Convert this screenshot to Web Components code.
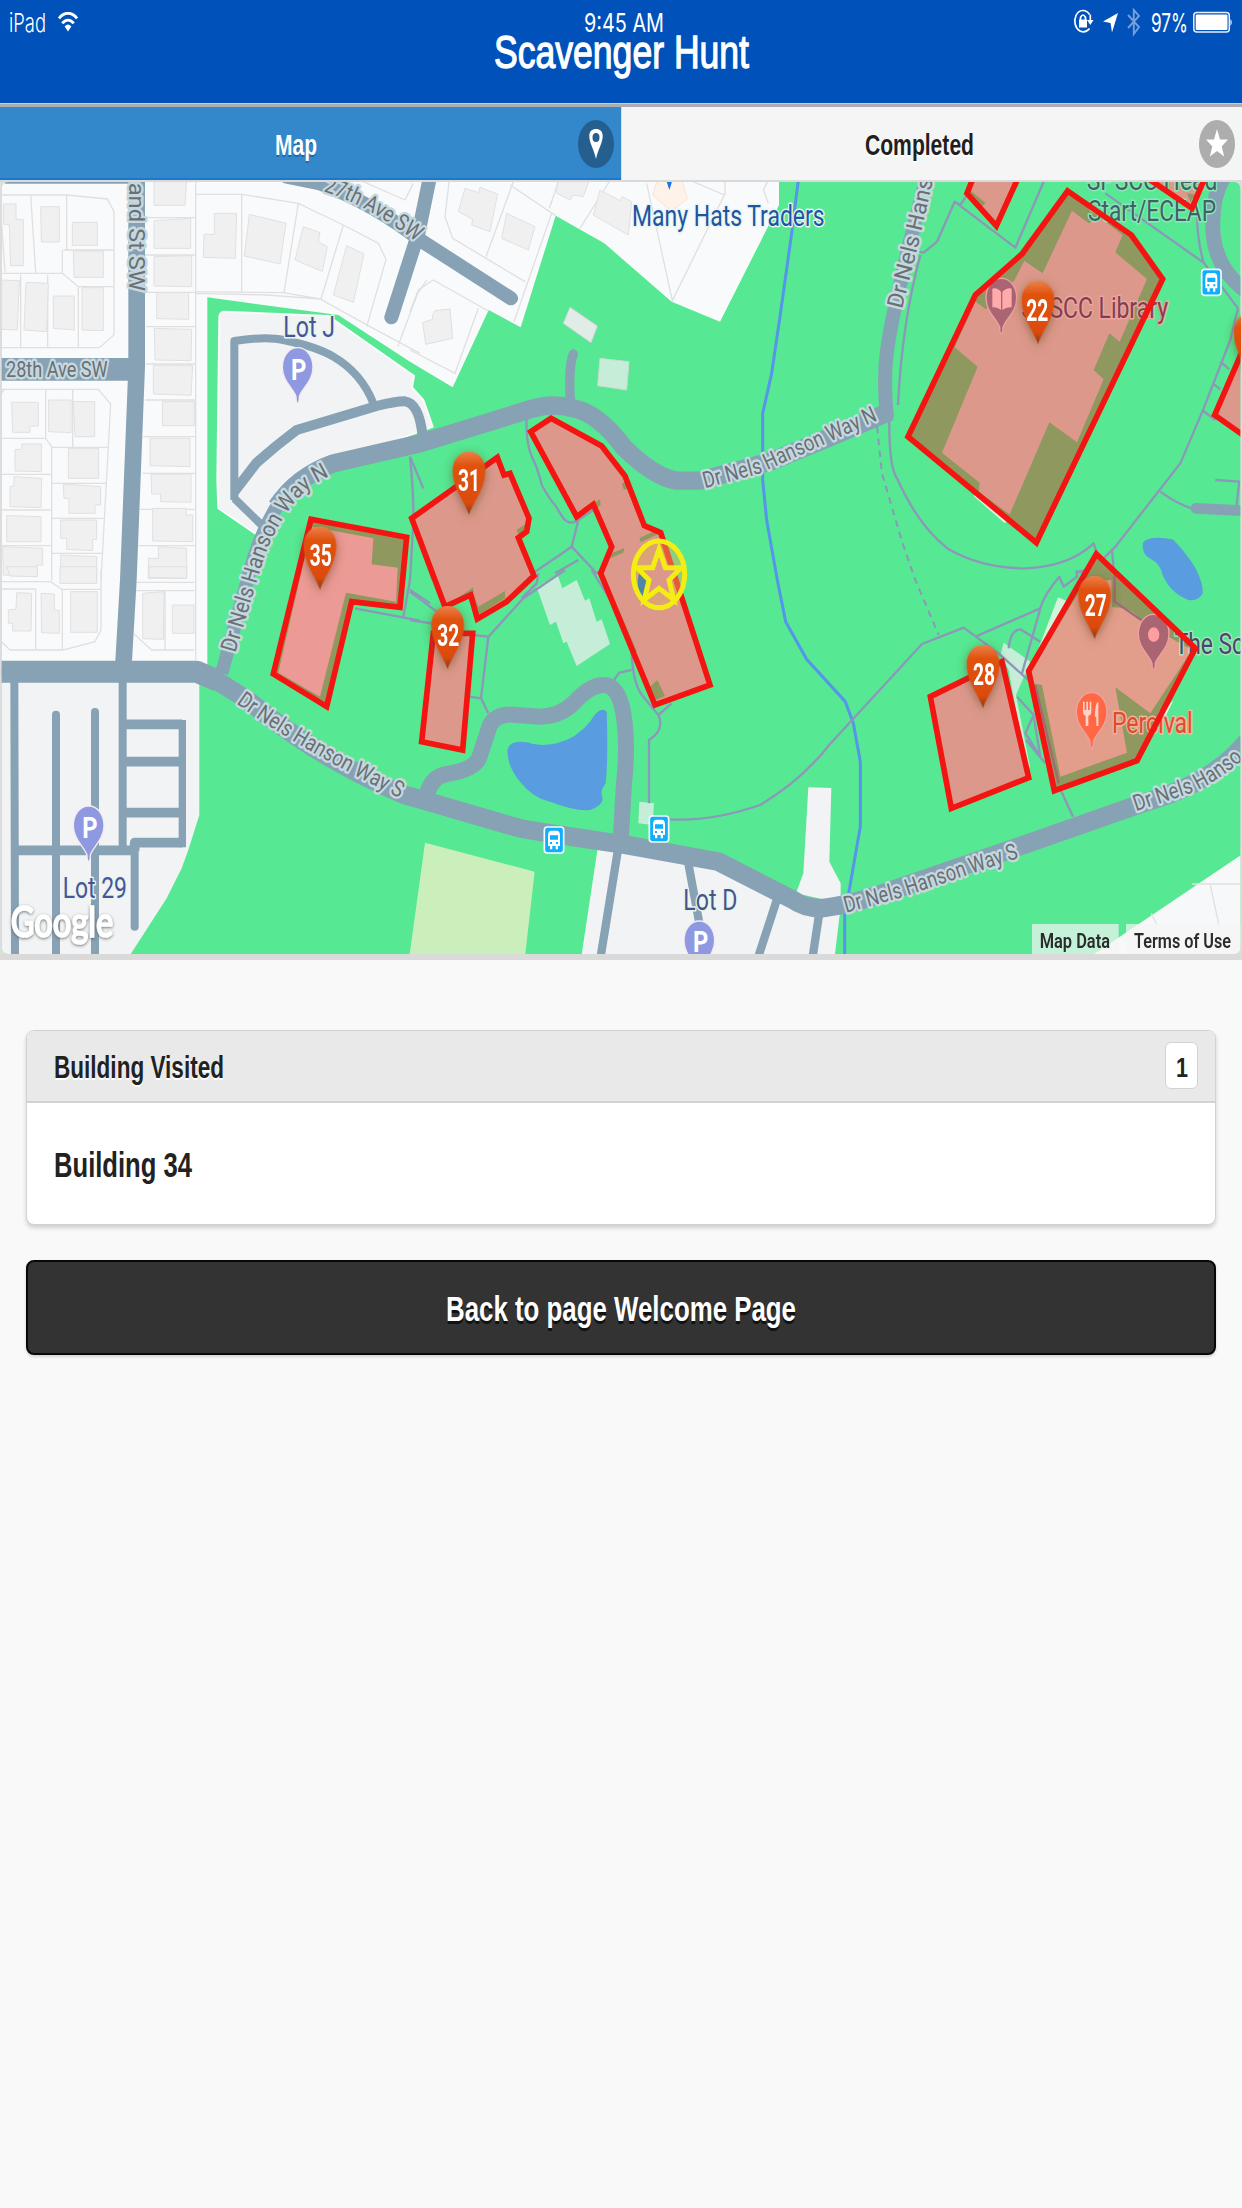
<!DOCTYPE html>
<html lang="en">
<head>
<meta charset="utf-8">
<title>Scavenger Hunt</title>
<style>
html,body{margin:0;padding:0;background:#f9f9f9}
body{font-family:"Liberation Sans",Arial,sans-serif;width:1242px;min-height:2208px}
</style>
</head>
<body>
<hunt-app></hunt-app>

<template id="t-app">
<style>
:host{display:flex;flex-direction:column;min-height:2208px;background:#f9f9f9}
nav{display:flex;height:73px;border-bottom:2px solid #d9d9d9;background:#ddd}
main{display:flex;flex-direction:column;padding:70px 26px 0;gap:36px}
</style>
<app-header>Scavenger Hunt</app-header>
<nav>
<nav-tab active label="Map" w="42"><svg slot="icon" width="36" height="48" viewBox="-18 -24 36 48"><ellipse rx="18" ry="24" fill="#245f8f"/><path fill-rule="evenodd" fill="#fff" d="M0 15C-2 5-6.700 -1-6.700-8C-6.700-12.500-4-15 0-15S6.700-12.500 6.700-8C6.700-1 2 5 0 15ZM0-11A3.500 4.500 0 1 0 0-2A3.500 4.500 0 1 0 0-11Z"/></svg></nav-tab>
<nav-tab label="Completed" w="109"><svg slot="icon" width="36" height="48" viewBox="-18 -24 36 48"><ellipse rx="18" ry="24" fill="#adadad"/><path fill="#fff" d="M0-15L3-4.500H11L4.700 2.500L7.200 12.500L0 7L-7.200 12.500L-4.700 2.500L-11-4.500H-3Z"/></svg></nav-tab>
</nav>
<campus-map></campus-map>
<main>
<visit-list label="Building Visited" count="1"><fit-text w="138" size="34.500" weight="bold">Building 34</fit-text></visit-list>
<dark-button><fit-text w="350" size="35" weight="bold" shadow="0 2.500px 0 #111">Back to page Welcome Page</fit-text></dark-button>
</main>
</template>

<template id="t-header">
<style>
:host{display:block;height:103px;background:#0051ba;color:#fff;border-bottom:1px solid #e0c8bb;box-shadow:0 3px 0 #aeaeb0;margin-bottom:3px}
.bar{display:grid;grid-template-columns:1fr 80px 1fr;padding:6px 9px 0 15px;height:30px;align-items:start}
.left{display:flex;gap:12px;margin-left:-6px}
.right{display:flex;justify-content:flex-end;align-items:flex-start}
.left svg{margin-top:6px}
h1{margin:-15px 0 0;display:flex;justify-content:center;font-weight:400}
</style>
<div class="bar">
<div class="left"><fit-text w="37" size="26" family="Inter" weight="300">iPad</fit-text>
<svg width="20" height="21" viewBox="0 0 20 21" fill="none" stroke="#fff" stroke-width="2.900"><path d="M1 6.500C6-.5 14-.5 19 6.500M4.300 11.300C7.500 7 12.500 7 15.700 11.300"/><path d="M6.600 14.500Q10 10.700 13.400 14.500L10 19.500Z" fill="#fff" stroke="none"/></svg></div>
<fit-text w="80" size="26" family="Inter" weight="400">9:45 AM</fit-text>
<div class="right">
<svg width="80" height="32" viewBox="1071 6 80 32"><g fill="none" stroke="#fff" stroke-width="1.700"><path d="M1089.500 14.500C1086 9 1079 9 1076 15.500C1073.500 21 1075 28 1080 31C1084 33 1087.500 31 1089.500 28.500"/><path d="M1090.300 14.500V20"/><path d="M1080.500 20.500V17.500Q1083 12.500 1085.500 17.500V20.500"/></g><path fill="#fff" d="M1079 19.500h8v8h-8zM1087 20H1093.500L1090.300 25ZM1103 21.500L1118 13L1112 32.500L1110.500 23Z"/><path d="M1128 15L1139 27L1133.800 34V10L1139 16L1128 28" fill="none" stroke="#769fdc" stroke-width="1.900"/></svg>
<fit-text w="37" size="26" family="Inter" weight="400">97%</fit-text>
<svg style="margin-left:5px" width="40" height="28" viewBox="0 0 40 28"><rect x=".8" y="6.500" width="35.500" height="19.500" rx="3" fill="none" stroke="#e6effa" stroke-width="1.500"/><rect x="2.700" y="8.500" width="31.800" height="15.500" rx="1" fill="#fff"/><path d="M37.500 13Q40 16 37.500 20Z" fill="#fff"/></svg>
</div></div>
<h1></h1>
</template>

<template id="t-tab">
<style>
:host{display:flex;flex:1;align-items:center;background:#f5f5f5;color:#1f1f1f;padding:0 7px 0 0;border-left:1px solid #ddd;box-sizing:border-box}
:host([active]){background:#3388cc;color:#fff;border-left:0;border-bottom:2px solid #1c78c8;padding-top:2px}
.l{flex:1;display:flex;justify-content:center;padding:0 0 6px 19px}
:host([active]) .l{padding-left:14px}
::slotted(svg){display:block}
</style>
<div class="l"></div><slot name="icon"></slot>
</template>

<template id="t-list">
<style>
:host{display:block;border:1.500px solid #d2d2d2;border-radius:8px;background:#fff;box-shadow:0 3px 4px rgba(0,0,0,.17);overflow:hidden;height:195px;margin-bottom:-1px;box-sizing:border-box;color:#222}
header{height:71.500px;border-bottom:2px solid #d2d2d2;background:#e9e9e9;display:flex;justify-content:space-between;align-items:center;padding:0 17px 0 26.500px;box-sizing:border-box}
.n{width:33px;height:47px;border:1.500px solid #d2d2d2;border-radius:6px;background:#fff;box-sizing:border-box;display:flex;align-items:center;justify-content:center;padding-bottom:6px}
.t{padding-bottom:6px}
.row{height:121px;display:flex;align-items:center;padding:0 26.500px 8px;box-sizing:border-box}
</style>
<header><div class="t"></div><div class="n"></div></header>
<div class="row"><slot></slot></div>
</template>

<template id="t-button">
<style>
:host{display:flex;height:95px;box-sizing:border-box;border:2px solid #080808;border-radius:8px;background:#333;color:#fff;justify-content:center;align-items:center;padding-bottom:9px;box-shadow:0 2px 3px rgba(0,0,0,.15)}
</style><slot></slot>
</template>

<template id="t-map">
<style>
:host{display:block;height:772px;background:#ddd;border-bottom:6px solid #dadada}
svg{display:block}
.road{fill:none;stroke:#87a2b4;stroke-linejoin:round}
.parcel{fill:none;stroke:#e0e0e0;stroke-width:4}
.house{fill:#f0f0f0;stroke:#e0e0e0;stroke-width:3}
.path{fill:none;stroke:#8c98b9;stroke-width:7;stroke-linejoin:round}
.lot{fill:#f1f3f4}.pale{fill:#c6edd8}.water{fill:#599ce0}
.out{fill:none;stroke:#f41512;stroke-width:17}
.pink{fill:#dc998b}.olive{fill:#8f985f}
text{font-family:Roboto,sans-serif}
.rl{font-size:68px;font-weight:400;fill:#6a6f74;stroke:#c5d8df;stroke-width:15;paint-order:stroke;stroke-linejoin:round}
.poi{font-size:86px;stroke:#e8f6ef;stroke-width:9;paint-order:stroke;stroke-linejoin:round}
.num{font-size:94px;font-weight:700;fill:#fff}
</style>
<svg width="1242" height="772" viewBox="0 546 3726 2316">
<defs>
<clipPath id="frame"><rect x="5" y="546" width="3716" height="2316" rx="18"/></clipPath>
<linearGradient id="og" x2="0" y2="1"><stop offset="0" stop-color="#ec8049"/><stop offset=".22" stop-color="#e0520f"/><stop offset=".8" stop-color="#dc4c0c"/><stop offset="1" stop-color="#8c3510"/></linearGradient>
<filter id="sh" x="-60%" y="-40%" width="220%" height="180%"><feDropShadow dx="0" dy="8" stdDeviation="14" flood-color="#542" flood-opacity=".55"/></filter>
<filter id="gs" x="-20%" y="-40%" width="140%" height="180%"><feDropShadow dx="0" dy="3" stdDeviation="5" flood-color="#555" flood-opacity=".8"/></filter>
<path id="op" d="M0 0C-10-34-49-78-49-132C-49-168-28-190 0-190S49-168 49-132C49-78 10-34 0 0Z"/>
<path id="pp" d="M0 0Q-5-2-5-20C-12-44-46-66-46-108C-46-142-26-167 0-167S46-142 46-108C46-66 12-44 5-20Q5-2 0 0Z"/>
<g id="bus"><rect x="-29" y="-39" width="58" height="78" rx="9" fill="#10aefc" stroke="#f2fbff" stroke-width="5"/><path fill="#fff" fill-rule="evenodd" d="M-18-13Q-18-28-8-28H8Q18-28 18-13V18H12V28H5V18H-5V28H-12V18H-18ZM-12-14V-1H12V-14ZM-12 6v6h6v-6zM6 6v6h6v-6z"/></g>
<path id="r27" d="M970 34Q1105 75 1262 196"/>
<path id="rst" d="M386 8V350"/>
<path id="rn1" d="M706 1420L775 1190Q810 1060 880 972Q930 910 1010 880"/>
<path id="rn2" d="M885 925L1050 880L1410 718"/>
<path id="rn3" d="M240 388L290 190L340-30"/>
<path id="rs1" d="M708 400Q900 540 1215 692"/>
<path id="rs2" d="M72 1028L240 982L600 860"/>
<path id="rs3" d="M942 724L1110 668Q1200 630 1300 535"/>
</defs>
<g clip-path="url(#frame)">
<rect y="540" width="3726" height="2330" fill="#56e893"/>
<path fill="#f9fafc" d="M0 540H2337V615L2160 965L2015 905L1813 730L1667 647L1562 982L1466 930L1358 1162L1230 1085L1015 945L622 892V2000H0Z"/>
<path class="lot" d="M0 2030H598V2445L565 2550L545 2605L500 2695L387 2870H0Z"/>
<g transform="translate(0 540)">
<path class="lot" stroke="#fafbfc" stroke-width="6" d="M672 395L985 408L1242 588L1236 622L1270 660L1298 740L1000 850L880 890L768 1062L655 985L652 900L658 410Q660 396 672 395Z"/>
<path class="parcel" d="M5 45H200L322 57L342 95V465L298 503H5M92 45L107 278M200 45V207M190 210H342M5 280H187L235 320H342M187 280V210M62 285V503M143 285V503M235 320V503M5 135L15 275M435 113H585M435 225H585M435 337H585M438 440H585M438 552H585M435 660H585M430 770H585M428 880H585M420 988H585M415 1097H585M587 0V1440M587 43H725L895 70L1030 135L1135 190L1158 238L1100 440M725 43V335M895 70L852 338M1030 135L963 357M587 335L850 338L960 357L1110 440L1260 520M587 340L800 345L960 357M1090 5L1215 60L1240 10M1280 300L1253 340L1193 500M5 628H295L332 672L303 1200M5 640L12 628M137 628V775L155 800V1200M218 628V800M5 775H137M155 802H325M5 883H152M155 910H318M5 990H152M155 1015H310M5 1097H152M155 1120H305"/>
<path class="house" d="M10 72H48V118H70V257H32L28 133H10ZM122 80H178V186H124ZM217 127H292V196H217ZM220 213H310V292H222ZM5 300L58 302L52 450L5 448ZM78 307L145 310L140 455L72 450ZM160 348H223V450L160 445ZM246 323H310V452L246 450ZM462-5H560L555 76H462ZM462 122L572 115V205H462ZM462 230L575 227V320L462 318ZM470 338H566V418L470 416ZM463 445L575 448L573 542L465 540ZM460 556H578L573 646L460 642ZM487 665H583V737H487ZM450 775H570V860L450 857ZM453 882H573V967L482 965V942H455ZM458 985H558V1005H578V1085L458 1083ZM475 1100L560 1105V1195H445V1135H475ZM35 667H115V738H90V757H38ZM146 660H213V758L146 755ZM220 665H284V770H225ZM45 808H65V792H124V875L45 873ZM205 805H296V895H205ZM42 890L125 895L123 983L30 980V920L42 917ZM190 912L302 920V975H285V1000H207V955H192ZM20 1007L123 1010V1085H20ZM182 1020H290V1078H278V1112L200 1108V1075H182ZM8 1100L128 1105V1155H112V1190L10 1185ZM182 1125L290 1130V1210H182ZM643 100H710L706 235L610 232L612 163H643ZM748 103L858 130L840 252L733 228ZM910 140L960 158L955 185L982 200L967 274L885 240ZM1040 197L1092 222L1060 367L1000 345Z"/>
</g>
<g transform="translate(1230 540)">
<path class="parcel" d="M118 0L105 110L128 175L345 305M312 0L228 230M300 15L437 107M425 100L312 425M445 5L418 85M510 145L598 5M710 10L787 362L943 45L850 5M945 0V45M0 395L25 330L70 300L235 393M205 385L135 580L0 510M1075 0L1060 30L1075 70"/>
<path class="house" d="M165 25L205 38L210 22L263 42L240 155L185 135L188 118L145 95ZM290 100L375 140L355 210L275 175ZM445-5H540L520 50L490 45L480 60L438 38ZM570 30L630 62L637 50L665 65L655 165L550 105ZM68 405L75 392L120 387L128 475L47 493L38 428L68 418Z"/>
<path fill="#fff2e8" stroke="#f8e2d2" stroke-width="3" d="M742 0H815L832 55L785 95L728 45Z"/>
<path fill="#e0ece6" stroke="#d6d0dc" stroke-width="3" d="M480 382L562 438L543 488L460 430Z"/><path class="pale" stroke="#c9dccf" stroke-width="3" d="M570 535L657 545L650 630L563 617Z"/>
</g>
<g transform="translate(0 1710)">
<path class="parcel" d="M5 35H152L185 58H303M303 0V180L285 215L190 240H30L5 215M107 58V238M187 58V238M5 57H107M410 37H583M407 62H583M495 62V238M402 192L455 240H583"/>
<path class="house" d="M447-10H560V25L447 22ZM20-10H112V20L30 18ZM180-10H290V40H180ZM50 68L95 70L93 183H38V160H25V120L48 118ZM123 70L163 72V120L178 122V190L125 188ZM212 65H292V187H212ZM428 70L492 65L490 208L428 206ZM517 105H582V190H517Z"/>
</g>
<g transform="translate(1230 1710)">
<path fill="#caefbb" d="M45 818L374 905L345 1160H-2Z"/>
<path class="lot" d="M563 835L820 870L930 890L1150 990L1292 1010L1274 1160H514ZM1195 652L1264 654L1258 875L1292 940V1000L1158 970L1180 910Z"/>
<path class="water" d="M590 425Q570 405 540 455Q500 505 440 520Q390 532 350 517Q300 508 292 540Q292 590 330 635Q370 685 420 695Q500 725 540 720Q580 705 578 685Q568 665 587 640Q595 560 590 425Z"/>
<path class="pale" d="M380 52L442 13L457 55L500 30L525 92L538 85L560 155L575 148L600 222L500 288L470 215L460 220L438 155L420 165ZM688 695L732 700L728 765L685 760Z"/>
</g>
<g transform="translate(2466 1710)">
<path fill="#f7f8fa" d="M1262 852L805 1160H1262Z"/><path class="parcel" d="M1110 942H1260M1165 945L1190 1062M988 1030L1003 1062"/>
<path fill="#d3f3da" d="M708 82L740 95L640 260Z"/><path fill="#e3f3e4" d="M1055 390L1020 460L1000 450Z"/><path class="pale" d="M545 218L625 275L582 375L624 590L615 600L560 300L535 255Z"/>
</g>
<path class="water" transform="translate(2466 540)" d="M965 1085Q985 1066 1052 1078Q1085 1110 1118 1160Q1145 1210 1142 1240Q1130 1265 1100 1260Q1045 1240 1022 1185Q1015 1150 985 1136Q960 1125 962 1090Z"/>
<path transform="translate(1230 540)" fill="none" stroke="#5595ea" stroke-width="9" d="M1165 0L1145 160L1110 410L1085 580L1058 700V900L1070 1020L1102 1200L1127 1325L1190 1438L1306 1565L1330 1630L1351 1745V1940L1316 2140L1304 2170V2330"/>

<g transform="translate(2466 540)" class="path">
<path d="M290 215L305 218L345 185L398 65L415 75L432 50M398 65L580 203L665 5M295 225Q240 430 228 675M202 710Q200 860 225 895Q290 1040 380 1108Q480 1165 610 1165Q740 1160 815 1090L825 1120M850 40L1145 248L1248 385M1125 100Q1125 180 1145 248M1248 385L1225 480L1145 685L1075 850L880 1100L800 1180L760 1175M1015 935Q1070 975 1110 985M1180 900L1252 905L1243 980M1195 545L1222 568M1172 610L1195 628M1140 690L1180 720M870 1110L878 1200"/>
<path d="M165 740L180 880L240 1085L280 1200L350 1365" stroke-dasharray="20 16" stroke-width="6"/>
</g>
<g transform="translate(2466 1710)" class="path"><path d="M-456 748Q-330 755-186 705Q-60 630 24 522L300 222L425 173L530 250L635 345M460 200L655 115Q665 75 712 20L725 50L765 20V5L800 0M655 115L600 310M560 235Q565 180 595 178L655 215M585 380L635 435L610 490L655 560L635 440M612 510L670 580M700 625L753 740"/></g>
<g transform="translate(1230 1710)" class="path"><path d="M717 700V510Q765 480 745 435L785 400M745 435L700 380Q665 340 665 230M665 300L628 308L612 330M235 430L213 385L235 200L190 195M235 200L340 85L465 0M335 85L380 40L385 10M178 380L213 385M0 65L80 125M0 150L65 160M545 0L620 120"/></g>
<g transform="translate(1230 540)" class="path"><path d="M350 700Q345 800 375 850Q390 890 395 915Q420 960 435 975L460 1015Q480 1038 505 1020L550 990M505 1020L485 1100L375 1175M485 1100L560 1180L605 1150M505 1140L435 1180M0 830L40 925M0 830Q15 980 8 1060L0 1200L-20 1310M-165 1285L30 1322M0 1230L60 1270"/></g>

<g transform="translate(0 540)" class="road">
<path stroke-width="50" d="M410-20V560L385 1200L370 1460"/><path stroke-width="68" d="M0 568H400"/><path stroke-width="18" d="M15 2H385"/>
<path stroke-width="42" stroke-linecap="round" d="M860-10L960 10Q1120 70 1260 180L1533 355M1290-10L1255 160L1174 412"/>
<path stroke-width="24" d="M703 960V483Q800 468 850 480Q950 500 1000 530Q1085 580 1120 670M703 955L790 1040"/>
<path stroke-width="30" d="M703 935L770 848Q830 795 890 750L1130 678Q1190 663 1215 664Q1258 670 1268 770"/>
<path stroke-width="40" d="M665 1480L745 1190Q775 1070 830 980"/><path stroke-width="55" d="M830 980Q890 890 1000 850L1260 790L1600 685Q1660 668 1720 685Q1795 700 1870 800Q1960 890 2030 902H2100L2310 845L2490 772L2670 695"/>
<path stroke-width="28" stroke-linecap="round" d="M1720 522Q1705 560 1711 660"/>
<path stroke-width="42" d="M2661 715Q2650 600 2660 520Q2670 450 2681 400L2726 200L2780-10"/>
<path stroke-width="45" d="M3672-10Q3630 60 3640 170Q3652 270 3740 335"/><path stroke-width="32" stroke-linecap="round" d="M3588 985L3740 993"/>
</g>
<g transform="translate(0 1710)" class="road">
<path stroke-width="66" d="M0 305H590L655 333"/><path stroke-width="56" d="M580 300L655 335L740 388Q960 570 1215 675L1260 688L1560 775L1660 792L1880 825L2155 875L2380 990Q2410 1012 2460 1015Q2520 1010 2620 980L3070 825L3426 700Q3640 640 3740 515"/>
<path stroke-width="24" stroke-linecap="round" d="M43 330L45 1170M168 434V1170M285 426V1170M368 330V830M404 841V1070"/>
<path stroke-width="29" d="M43 841H404M368 463H547M368 575H547M368 728H547M404 843V818H547"/><path stroke-width="22" d="M547 450V832"/>
</g>
<g transform="translate(1230 1710)" class="road">
<path stroke-width="48" d="M52 670Q65 620 110 612Q190 600 207 565L240 465Q260 430 310 434L390 440Q450 438 490 400Q540 345 580 345Q625 345 640 430Q655 520 642 640L632 810"/>
<path stroke-width="25" d="M623 845L572 1160M835 880L868 1060M1102 985L1045 1160M1227 1035L1208 1160"/>
</g>

<g transform="translate(2466 540)">
<path fill="#dcefe5" d="M455 948L548 1030L556 1022L460 940Z"/>
<path class="olive" d="M737 33L928 165L1022 297L643 1088L258 770L460 345L600 222Z"/>
<path class="pink" d="M750 92L800 130L832 112L902 165L880 217L975 297L893 485L862 460L815 570L845 598L765 787L682 727L563 1003L470 935L473 908L360 818L467 560L398 502L460 365L492 388L578 300L607 242L662 280Z"/>
<path class="pink" d="M455-10L435 40L523 138L590-10ZM970-10L1110 85L1150-10ZM1270 505L1178 705L1270 770Z"/><path class="olive" d="M443 30L490 68L480 80L440 45ZM1095 40L1125 45L1110 75Z"/>
</g>
<g transform="translate(1230 540)">
<path class="pink" d="M423 715L575 798L645 888L703 1037L752 1058L900 1515L735 1575L572 1180L605 1100L550 973L500 1010L362 755ZM5 1015L262 832L282 885L300 880L357 1015L350 1055L325 1073L372 1187L290 1265L202 1317L182 1245L105 1280Z"/>
<path class="olive" d="M720 1520L742 1500L765 1548L738 1560ZM545 975L570 958L572 975L555 988ZM688 1075L735 1052L745 1062L692 1087ZM605 1120L643 1104L640 1118L600 1135ZM635 912L645 905L655 925L642 930ZM320 1050L347 1032L345 1050L325 1065ZM615 1262L680 1412L675 1420L612 1280ZM120 1270L190 1222V1240L205 1280L285 1233V1255L205 1305L185 1240ZM8 1040L75 1200L65 1200Z"/>
</g>
<g transform="translate(0 540)"><path class="olive" d="M933 1018L1220 1072L1200 1282L1055 1265L980 1580L820 1482Z"/><path fill="#ec9a95" d="M935 1040L1120 1075L1115 1153L1193 1163L1188 1265L1038 1238L960 1550L835 1478Z"/></g>
<path class="pink" transform="translate(1230 1710)" d="M70 190H188L158 540L35 515Z"/>
<g transform="translate(2466 1710)">
<path class="pink" d="M325 380L540 275L620 623L388 715Z"/>
<path class="olive" d="M823-48L1120 235L945 572L697 662L620 303Z"/>
<path fill="#e39e8b" d="M628 300L790 35L868 30L870 112Q930 110 960 155L1110 240L985 430L880 352L915 548L715 620L660 345L630 340Z"/><path class="path" style="stroke:#a06a78" d="M878 15V95L960 152M640 345L710 640"/>
</g>

<g class="rl">
<text transform="translate(0 540)" x="18" y="592" textLength="305" lengthAdjust="spacingAndGlyphs">28th Ave SW</text>
<g transform="translate(0 540)"><text><textPath href="#rst" textLength="325" lengthAdjust="spacingAndGlyphs">and St SW</textPath></text>
<text><textPath href="#r27" textLength="318" lengthAdjust="spacingAndGlyphs">27th Ave SW</textPath></text>
<text><textPath href="#rn1" textLength="622" lengthAdjust="spacingAndGlyphs">Dr Nels Hanson Way N</textPath></text></g>
<text transform="translate(1230 540)"><textPath href="#rn2" textLength="560" lengthAdjust="spacingAndGlyphs">Dr Nels Hanson Way N</textPath></text>
<text transform="translate(2466 540)"><textPath href="#rn3" textLength="400" lengthAdjust="spacingAndGlyphs">Dr Nels Hans</textPath></text>
<text transform="translate(0 1710)"><textPath href="#rs1" textLength="568" lengthAdjust="spacingAndGlyphs">Dr Nels Hanson Way S</textPath></text>
<g transform="translate(2466 1710)"><text><textPath href="#rs2" textLength="545" lengthAdjust="spacingAndGlyphs">Dr Nels Hanson Way S</textPath></text>
<text><textPath href="#rs3" textLength="362" lengthAdjust="spacingAndGlyphs">Dr Nels Hanso</textPath></text></g>
</g>

<g class="poi">
<path transform="translate(1230 540)" d="M770 5H786L778 30Z" fill="#1a73e8" stroke="none"/>
<text x="1896" y="677" fill="#1d54a4" textLength="578" lengthAdjust="spacingAndGlyphs">Many Hats Traders</text>
<text x="850" y="1012" fill="#47549a" textLength="155" lengthAdjust="spacingAndGlyphs">Lot J</text>
<text x="188" y="2693" fill="#47549a" textLength="193" lengthAdjust="spacingAndGlyphs">Lot 29</text>
<text x="2050" y="2730" fill="#47548a" textLength="162" lengthAdjust="spacingAndGlyphs">Lot D</text>
<g transform="translate(2466 540)"><text x="794" y="30" fill="#3d6268" style="stroke:#8fe7b6" textLength="392" lengthAdjust="spacingAndGlyphs">SPSCC Head</text>
<text x="798" y="122" fill="#3d6268" style="stroke:#8fe7b6" textLength="384" lengthAdjust="spacingAndGlyphs">Start/ECEAP</text>
<text x="598" y="415" fill="#80404f" style="stroke:#f0a5a0" textLength="440" lengthAdjust="spacingAndGlyphs">SPSCC Library</text></g>
<g transform="translate(2466 1710)"><text x="1058" y="252" fill="#46486e" style="stroke:#a6e6bb" textLength="208" lengthAdjust="spacingAndGlyphs">The Sc</text>
<text x="870" y="488" fill="#e04a2e" style="stroke:#f2b79f" textLength="242" lengthAdjust="spacingAndGlyphs">Percival</text></g>
</g>

<g stroke="#f4ecef" stroke-width="4">
<use href="#pp" x="893" y="1210" fill="#8f99e2"/><use href="#pp" x="266" y="2585" fill="#8f99e2"/><use href="#pp" x="2098" y="2930" fill="#8f99e2"/>
<g stroke="#f0a0a0"><use href="#pp" x="3004" y="1002" fill="#a96672"/><use href="#pp" x="3461" y="2010" fill="#a96672"/><use href="#pp" x="3275" y="2245" fill="#ff6843"/></g>
</g>
<g class="num" style="font-size:90px" text-anchor="middle"><text x="896" y="1140" textLength="46" lengthAdjust="spacingAndGlyphs">P</text><text x="270" y="2513" textLength="46" lengthAdjust="spacingAndGlyphs">P</text><text x="2102" y="2857" textLength="46" lengthAdjust="spacingAndGlyphs">P</text></g>
<path fill="#ffabab" d="M2977 866Q2992 862 3003 876V930Q2992 920 2977 922ZM3007 876Q3020 862 3035 866V922Q3020 920 3007 930Z"/>
<ellipse cx="3461" cy="1904" rx="17" ry="22" fill="#ff9ea0"/>
<path fill="#ffd3cb" d="M3249 2105h5v25h5v-25h5v25h5v-25h5v30Q3274 2145 3265 2147V2178H3257V2147Q3249 2145 3249 2135ZM3285 2150Q3285 2108 3295 2105V2178H3289V2150Z"/>
<use href="#bus" x="1662" y="2520"/><use href="#bus" x="1977" y="2487"/><use href="#bus" x="3634" y="847"/>

<g class="out">
<g transform="translate(2466 540)"><path d="M737 33L928 165L1022 297L643 1088L258 770L460 345L600 222ZM455-10L435 40L523 138L590-10ZM970-10L1110 85L1150-10ZM1270 492L1178 705L1270 770Z"/></g>
<g transform="translate(1230 540)"><path d="M423 715L575 798L645 888L703 1037L752 1058L900 1515L735 1575L572 1180L605 1100L550 973L500 1010L362 755ZM5 1015L262 832L282 885L300 880L357 1015L350 1055L325 1073L372 1187L290 1265L202 1317L182 1245L105 1280Z"/></g>
<path transform="translate(0 540)" d="M933 1018L1220 1072L1200 1282L1055 1265L980 1580L820 1482Z"/>
<path transform="translate(1230 1710)" d="M70 190H188L158 540L35 515Z"/>
<path transform="translate(2466 1710)" d="M325 380L540 275L620 623L388 715ZM823-48L1120 235L945 572L697 662L620 303Z"/>
</g>

<g transform="translate(1977 1723)" fill="none" stroke="#f3ed12" stroke-linejoin="miter">
<ellipse rx="77" ry="100" fill="#dcae62" fill-opacity=".45" stroke="none"/><path d="M-60-5Q-30-10-35 30L-48 70Q-72 40-60-5Z" fill="#4f86a6" stroke="none"/>
<path d="M0-75L19-20H66L30 17L44 76L0 42L-44 76L-30 17L-66-20H-19Z" fill="#dc998b" stroke-width="15"/><ellipse rx="77" ry="100" stroke-width="15"/></g>

<g filter="url(#sh)" fill="url(#og)"><use href="#op" x="1407" y="1545"/><use href="#op" x="3114" y="1033"/><use href="#op" x="960" y="1770"/><use href="#op" x="1343" y="2008"/><use href="#op" x="2949" y="2125"/><use href="#op" x="3284" y="1918"/><use href="#op" x="3750" y="1130"/></g>
<g class="num" text-anchor="middle">
<text x="1407" y="1473" textLength="66" lengthAdjust="spacingAndGlyphs">31</text><text x="3112" y="962" textLength="66" lengthAdjust="spacingAndGlyphs">22</text><text x="962" y="1697" textLength="66" lengthAdjust="spacingAndGlyphs">35</text><text x="1345" y="1938" textLength="66" lengthAdjust="spacingAndGlyphs">32</text><text x="2952" y="2054" textLength="66" lengthAdjust="spacingAndGlyphs">28</text><text x="3287" y="1847" textLength="66" lengthAdjust="spacingAndGlyphs">27</text>
</g>
<text x="32" y="2812" filter="url(#gs)" fill="#fff" stroke="#fff" stroke-width="5" style="font-family:Lato,sans-serif;font-weight:500;font-size:126px" textLength="308" lengthAdjust="spacingAndGlyphs">Google</text>
<g transform="translate(2466 1710)"><path fill="#f5f5f5" fill-opacity=".7" d="M630 1062H890V1160H630ZM912 1062H1260V1160H912Z"/>
<g fill="#2b2b2b" style="font-size:61px;font-weight:600"><text x="653" y="1133" textLength="211" lengthAdjust="spacingAndGlyphs">Map Data</text><text x="936" y="1133" textLength="291" lengthAdjust="spacingAndGlyphs">Terms of Use</text></g></g>
</g>
</svg>
</template>

<script>
const stamp = (host, id) => {
  const root = host.attachShadow({mode: 'open'});
  root.append(document.getElementById(id).content.cloneNode(true));
  return root;
};

/* Text set to an exact width; its baseline sits on the bottom of the box. */
class FitText extends HTMLElement {
  connectedCallback() {
    if (!this.shadowRoot) this.attachShadow({mode: 'open'});
    const a = (n, d) => this.getAttribute(n) || d;
    const w = a('w', 100), size = a('size', 16);
    this.shadowRoot.innerHTML = `<style>:host{display:block;flex:none;width:${w}px;height:${size}px}svg{display:block;overflow:visible}
      text{font:${a('weight', '400')} ${size}px ${a('family', '"Liberation Sans"')},sans-serif;text-shadow:${a('shadow', 'none')}}</style>
      <svg width="${w}" height="${size}"><text y="${size}" fill="currentColor" stroke="currentColor" stroke-width="${a('stroke', '0')}" textLength="${w}" lengthAdjust="spacingAndGlyphs"></text></svg>`;
    this.shadowRoot.querySelector('text').textContent = this.textContent.trim();
  }
}
const fit = (text, attrs) => {
  const el = document.createElement('fit-text');
  el.textContent = text;
  for (const k in attrs) el.setAttribute(k, attrs[k]);
  return el;
};
class AppHeader extends HTMLElement {
  connectedCallback() {
    const root = stamp(this, 't-header');
    root.querySelector('h1').append(fit(this.textContent, {w: 255, size: 47, stroke: '1.3'}));
  }
}
class NavTab extends HTMLElement {
  connectedCallback() {
    const shadow = this.hasAttribute('active') ? '0 2px 0 #1f68a8' : '0 2px 0 #fff';
    stamp(this, 't-tab').querySelector('.l').append(fit(this.getAttribute('label'), {w: this.getAttribute('w'), size: 29, weight: 'bold', shadow}));
  }
}
class VisitList extends HTMLElement {
  connectedCallback() {
    const root = stamp(this, 't-list');
    root.querySelector('.t').append(fit(this.getAttribute('label'), {w: 170, size: 31, weight: 'bold', shadow: '0 2px 0 #fff'}));
    root.querySelector('.n').append(fit(this.getAttribute('count'), {w: 12, size: 28, weight: 'bold'}));
  }
}
class DarkButton extends HTMLElement { connectedCallback() { stamp(this, 't-button'); } }
class CampusMap extends HTMLElement { connectedCallback() { stamp(this, 't-map'); } }
class HuntApp extends HTMLElement { connectedCallback() { stamp(this, 't-app'); } }
customElements.define('fit-text', FitText);
customElements.define('app-header', AppHeader);
customElements.define('nav-tab', NavTab);
customElements.define('visit-list', VisitList);
customElements.define('dark-button', DarkButton);
customElements.define('campus-map', CampusMap);
customElements.define('hunt-app', HuntApp);
</script>
</body>
</html>
